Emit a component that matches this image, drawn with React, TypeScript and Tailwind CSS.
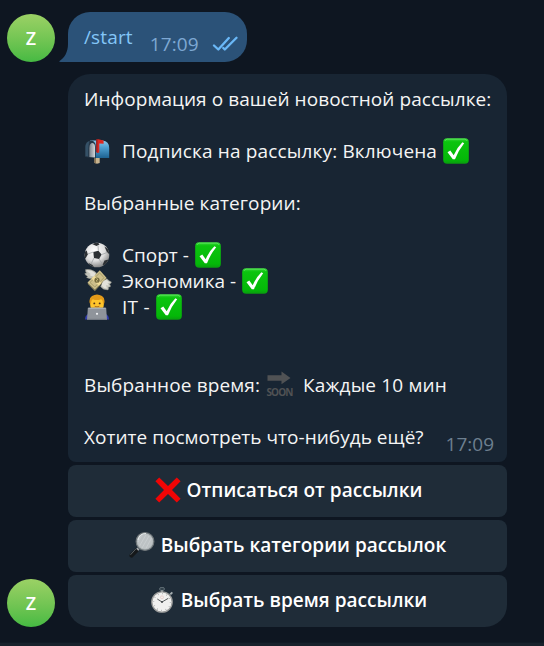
import type { ReactNode } from "react";

function Check() {
  return (
    <svg width="26" height="26" viewBox="0 0 26 26" className="shrink-0">
      <defs>
        <linearGradient id="ck" x1="0" y1="0" x2="0" y2="1">
          <stop offset="0" stopColor="#3fdc3f" />
          <stop offset="0.14" stopColor="#0cc40f" />
          <stop offset="0.85" stopColor="#04b808" />
          <stop offset="1" stopColor="#0a9a10" />
        </linearGradient>
      </defs>
      <rect x="0.2" y="0.2" width="25.6" height="25.6" rx="4" fill="url(#ck)" />
      <path d="M2 3 Q2.500 1.300 4.500 1.200 H21.500 Q23.500 1.300 24 3" fill="none" stroke="#7bf07b" strokeOpacity="0.6" strokeWidth="0.8" />
      <path d="M4.500 14.300 L7.300 12.600 L10.700 17.300 Q14 9.500 19.400 4.300 L21.200 5.200 Q15.300 12.500 12 21.200 H9.800 Z" fill="#fff" />
    </svg>
  );
}

function Mailbox() {
  return (
    <svg width="26" height="26" viewBox="0 0 26 26" className="shrink-0">
      <defs>
        <linearGradient id="mb" x1="0" y1="0" x2="0" y2="1">
          <stop offset="0" stopColor="#8cc9ea" />
          <stop offset="0.4" stopColor="#4e9fd0" />
          <stop offset="1" stopColor="#1d6291" />
        </linearGradient>
        <linearGradient id="mi" x1="0" y1="0" x2="1" y2="0">
          <stop offset="0" stopColor="#77808a" />
          <stop offset="1" stopColor="#d3d6d9" />
        </linearGradient>
      </defs>
      <path d="M10.500 18 H15.700 V25 L13 25.800 L10.500 25Z" fill="#c7b38e" />
      <path d="M10.500 18 H12 V25.300 L10.500 25Z" fill="#8b7554" />
      <path d="M6 2.500 H18.500 Q25.200 3 25.200 10 V20 H10.500Z" fill="url(#mb)" />
      <path d="M1 9 Q1.500 2.500 7 2.500 Q11.800 3 11.800 9 V20.300 L1 19Z" fill="#253747" />
      <path d="M5.300 10 Q5.500 5 8.500 5 Q11 5.500 11 9 V19.500 L5.300 19Z" fill="url(#mi)" />
      <path d="M1.500 18 V8 Q2 4 5.500 3.200 Q4 6 4.200 18.500Z" fill="#355167" />
      <path d="M12.200 1.500 L14.500 1.200 L19.600 2.400 V5.700 L15.300 5.400 V14.500 L13 15 L12.200 13.500Z" fill="#df2820" />
      <path d="M12.200 1.500 L13.500 2 V15 L12.200 13.500Z" fill="#8e2025" />
    </svg>
  );
}

function Ball() {
  return (
    <svg width="26" height="26" viewBox="0 0 26 26" className="shrink-0">
      <defs>
        <radialGradient id="bl" cx="0.4" cy="0.32" r="0.7">
          <stop offset="0" stopColor="#fff" />
          <stop offset="0.6" stopColor="#dedede" />
          <stop offset="1" stopColor="#858585" />
        </radialGradient>
        <clipPath id="bc"><circle cx="13" cy="13" r="12.300" /></clipPath>
      </defs>
      <circle cx="13" cy="13" r="12.300" fill="url(#bl)" />
      <g clipPath="url(#bc)" fill="#2c3034">
        <path d="M9.300 10 L14.400 8.700 L17.600 12.600 L15.100 17 L10 16Z" />
        <path d="M8 2 L13.500 0 L15.500 2.600 L12.500 4Z" />
        <path d="M20.500 4.500 L25.500 8 V12.500 L22.800 9.800Z" />
        <path d="M0 10 L2.700 8.500 L3.800 12.500 L1.500 16.500 L0 15Z" />
        <path d="M4.500 21 L8.500 23 L10.500 26 H6Z" />
        <path d="M20.500 18.500 L24.500 17.500 L22 23 L18.500 23Z" />
      </g>
      <path d="M9.300 10 L3.800 12 M14.400 8.700 L14 3.500 M17.600 12.600 L23 10.500 M15.100 17 L18.700 22.500 M10 16 L7 22" stroke="#999da0" strokeWidth="0.7" fill="none" />
    </svg>
  );
}

function Money() {
  return (
    <svg width="28" height="26" viewBox="0 0 28 26" className="shrink-0">
      <g fill="#c3c4bb" stroke="#85867b" strokeWidth="0.4">
        <path d="M11 9 Q6 12 2.500 9.500 Q3.500 9 3.500 8.300 Q.8 7.500 .8 5 Q2 5.500 2.500 5 Q1 3.500 1.500 1.500 Q8 .500 12.500 5Z" />
        <path d="M18 16 Q19 10.500 23 10.800 Q25 13 27.500 14 Q27 16 25.500 16 Q27 17.500 26.300 19 Q25 18.800 24.500 19.300 Q25 21 24 22 Q19 22 16.500 18.500Z" />
      </g>
      <path d="M3.500 15.800 L15.800 3.300 L22.500 10.800 L10.800 23.300Z" fill="#7d7753" />
      <path d="M3.500 14.500 L15.800 2.300 L22.500 9.700 L10.800 21.500Z" fill="#cdbf8a" />
      <path d="M6 14.500 L15.700 4.900 L20 9.700 L10.800 19Z" fill="none" stroke="#a29967" strokeWidth="0.9" />
      <path d="M7.500 10.500 L10.300 7.700 L17.500 15 L14.800 17.700Z" fill="#f0dc98" />
      <ellipse cx="13" cy="12.200" rx="2.600" ry="2.600" fill="#746a3d" />
      <path d="M12.500 10.500 Q15 11.500 12.700 12.300 Q11.500 13 13.500 14" fill="none" stroke="#d9cb89" strokeWidth="0.8" />
      <path d="M10 8.500 Q6 8 5.500 6.500 L7 6.300 Q3.800 4.500 2.500 2.300 Q8 2 11.500 5.500Z" fill="#e2e1d9" />
      <path d="M18 15.500 Q19.500 11.500 22.500 12 Q24 13.500 26.500 14.500 L23.500 15 L25 17.500 L22 17.300 L23 20.500 Q19 20 17.500 17.500Z" fill="#e2e1d9" />
    </svg>
  );
}

function Coder() {
  return (
    <svg width="26" height="26" viewBox="0 0 26 26" className="shrink-0">
      <path d="M1 25.500 Q1 19.500 8 19 H18 Q25 19.500 25 25.500Z" fill="#343fb0" />
      <path d="M10 15 H16 V20 H10Z" fill="#e59c20" />
      <path d="M6 9 Q5.500 1.500 13 1.400 Q20.500 1.500 20 9 Q20 17 13 17.500 Q6 17 6 9Z" fill="#ffc52b" />
      <path d="M5.700 9.300 Q4.700 4 8 2 Q13 -1 18 2 Q21.300 4 20.300 9.300 L19 10 Q19 6 17 5.200 Q12.500 7 9 5.200 Q7 6 7 10Z" fill="#e39a19" />
      <circle cx="10.300" cy="9.400" r="0.950" fill="#4e2d18" />
      <circle cx="15.700" cy="9.400" r="0.950" fill="#4e2d18" />
      <path d="M10.700 12.300 Q13 13.300 15.300 12.300" stroke="#a35a15" strokeWidth="0.800" fill="none" />
      <path d="M3.800 14.500 Q3.900 13.600 4.900 13.600 H21.100 Q22.100 13.600 22.200 14.500 L23 25.700 H3Z" fill="#8f949b" />
      <path d="M4.500 14.500 H21.500" stroke="#bcc1c6" strokeWidth="0.600" />
      <circle cx="13" cy="19.800" r="1.100" fill="#f1f3f5" />
      <path d="M3 24.800 H23 V26 H3Z" fill="#747a83" />
    </svg>
  );
}

function Soon() {
  return (
    <span className="flex w-[27px] shrink-0 flex-col items-center text-[#505254]">
      <svg width="27" height="14" viewBox="0 0 27 14">
        <path d="M1.500 4.300 H15.500 V0.600 L24.500 7 L15.500 13.300 V9.700 H1.500Z" fill="currentColor" />
      </svg>
      <span className="text-[10px] leading-[14px] font-bold tracking-[-0.9px]">SOON</span>
    </span>
  );
}

function Cross() {
  return (
    <svg width="26" height="26" viewBox="0 0 26 26" className="shrink-0">
      <path d="M4.200 .400 L13 9 L21.800 .400 L25.600 4.200 L17 13 L25.600 21.800 L21.800 25.600 L13 17 L4.200 25.600 L.400 21.800 L9 13 L.400 4.200Z" fill="#f00505" />
    </svg>
  );
}

function Magnifier() {
  return (
    <svg width="26" height="26" viewBox="0 0 26 26" className="shrink-0">
      <path d="M8.500 15.500 L10.500 17.500 L8.500 19.500 L6.500 17.500Z" fill="#a8acae" />
      <path d="M6.800 16.300 L9.700 19.200 L3.500 25.500 Q1.500 26 .500 24.500 Q0 23.500 1 22Z" fill="#15181a" />
      <path d="M6.800 17 L1.500 22.800" stroke="#60676a" strokeWidth="0.900" />
      <circle cx="16" cy="9.500" r="8.900" fill="#adb4b6" stroke="#6e7578" strokeWidth="1.100" />
      <circle cx="16" cy="9.500" r="7.500" fill="#bdc2c4" />
      <path d="M9 8 Q10.500 1.300 17 1.500" stroke="#eef2f2" strokeWidth="0.900" fill="none" />
      <path d="M13 3 L9 10 M17 2.700 L10.500 14 M20 4 L13 16 M22.500 6 L17 16.300" stroke="#d5d9da" strokeWidth="0.500" />
    </svg>
  );
}

function Stopwatch() {
  return (
    <svg width="26" height="26" viewBox="0 0 26 26" className="shrink-0">
      <ellipse cx="13" cy="2" rx="2.500" ry="1.700" fill="#33424b" stroke="#78858b" strokeWidth="0.700" />
      <path d="M12 3 H14 V6 H12Z" fill="#858e93" />
      <path d="M20.500 6.800 L22.700 4.700 L24 6 L22 8" fill="#a5adb0" />
      <circle cx="13" cy="15" r="10.200" fill="#f0f0ef" stroke="#9b9c9b" strokeWidth="1.300" />
      <circle cx="13" cy="15" r="8.400" fill="none" stroke="#989b9d" strokeWidth="1.300" strokeDasharray="0.600 3.798" />
      <path d="M8.300 12 L13 15 L19.300 11.300" fill="none" stroke="#44484b" strokeWidth="0.900" />
      <circle cx="13" cy="15" r="0.900" fill="#383c3f" />
      <circle cx="13" cy="10.300" r="1.500" fill="none" stroke="#e3aaa5" strokeWidth="0.400" />
    </svg>
  );
}

function Avatar() {
  return (
    <div className="flex size-12 shrink-0 items-center justify-center rounded-full bg-linear-to-b from-[#9bd165] to-[#45ba43] text-[18px] leading-none font-semibold text-white">
      Z
    </div>
  );
}

function Line({ children }: { children?: ReactNode }) {
  return <div className="flex h-[26px] items-center whitespace-pre">{children}</div>;
}

function Button({ icon, label, shape }: { icon: ReactNode; label: string; shape: string }) {
  return (
    <button className={`flex h-[52px] w-full items-center justify-center bg-[#1f2c38] pb-[2px] text-[19px] font-semibold tracking-[0.03px] whitespace-nowrap text-white ${shape}`}>
      {icon}
      <span className="ml-[6px]">{label}</span>
    </button>
  );
}

export default function App() {
  return (
    <div className="flex h-[646px] w-[544px] flex-col overflow-hidden bg-[#0e1621] font-['Open_Sans','Noto_Sans',sans-serif] text-[19px] leading-[26px] text-[#f5f5f5]">
      <div className="flex items-end pt-3 pl-[7px]">
        <Avatar />
        <div className="ml-1 flex items-end">
          <svg width="9" height="18" viewBox="0 0 9 18">
            <path d="M9 0 C9 8 5.500 14 0.300 17.200 Q0 18 1.500 18 H9Z" fill="#2b5278" />
          </svg>
          <div className="flex h-[50px] w-[179px] rounded-[22px] rounded-bl-none bg-[#2b5278] pt-3 pl-4">
            <span className="tracking-[0.15px] text-[#84c6f7]">/start</span>
            <span className="mt-[7px] ml-[17px] tracking-[0.1px] text-[#7da8d3]">17:09</span>
            <svg width="26" height="16" viewBox="0 0 26 16" className="mt-[12px] ml-[13px]">
              <path d="M2 9.500 L6.300 13.500 L16.800 2 M11.300 12 L12.800 13.500 L24.500 1.700" fill="none" stroke="#6ab8f7" strokeWidth="2.300" strokeLinecap="round" strokeLinejoin="round" />
            </svg>
          </div>
        </div>
      </div>

      <div className="mt-3 flex items-end pl-[7px]">
        <Avatar />
        <div className="ml-[13px] flex w-[439px] flex-col gap-[3px]">
          <div className="flex h-[388px] flex-col rounded-t-[22px] rounded-b-[8px] bg-[#182533] px-4 pt-3">
            <Line><span className="tracking-[0.06px]">Информация о вашей новостной рассылке:</span></Line>
            <Line />
            <Line>
              <Mailbox />
              <span className="ml-3 tracking-[0.15px]">Подписка на рассылку: Включена</span>
              <span className="ml-[6px]"><Check /></span>
            </Line>
            <Line />
            <Line><span className="tracking-[0.09px]">Выбранные категории:</span></Line>
            <Line />
            <Line>
              <Ball />
              <span className="mr-[6px] ml-3">Спорт -</span>
              <Check />
            </Line>
            <Line>
              <Money />
              <span className="mr-[6px] ml-[10px]">Экономика -</span>
              <Check />
            </Line>
            <Line>
              <Coder />
              <span className="mr-[6px] ml-3 tracking-[0.25px]">IT -</span>
              <Check />
            </Line>
            <Line />
            <Line />
            <Line>
              <span className="mr-[6px] tracking-[0.12px]">Выбранное время:</span>
              <Soon />
              <span className="ml-[10px] tracking-[0.15px]">Каждые 10 мин</span>
            </Line>
            <Line />
            <Line>
              <span className="tracking-[0.03px]">Хотите посмотреть что-нибудь ещё?</span>
              <span className="mt-[14px] ml-auto mr-[-3px] text-[#6d7f8f]">17:09</span>
            </Line>
          </div>
          <Button icon={<Cross />} label="Отписаться от рассылки" shape="rounded-[8px] pl-[2px]" />
          <Button icon={<Magnifier />} label="Выбрать категории рассылок" shape="rounded-[8px]" />
          <Button icon={<Stopwatch />} label="Выбрать время рассылки" shape="rounded-t-[8px] rounded-b-[22px] pl-[1px]" />
        </div>
      </div>
      <div className="mt-auto h-1 border-t border-[#101a25] bg-[#17212b]" />
    </div>
  );
}
